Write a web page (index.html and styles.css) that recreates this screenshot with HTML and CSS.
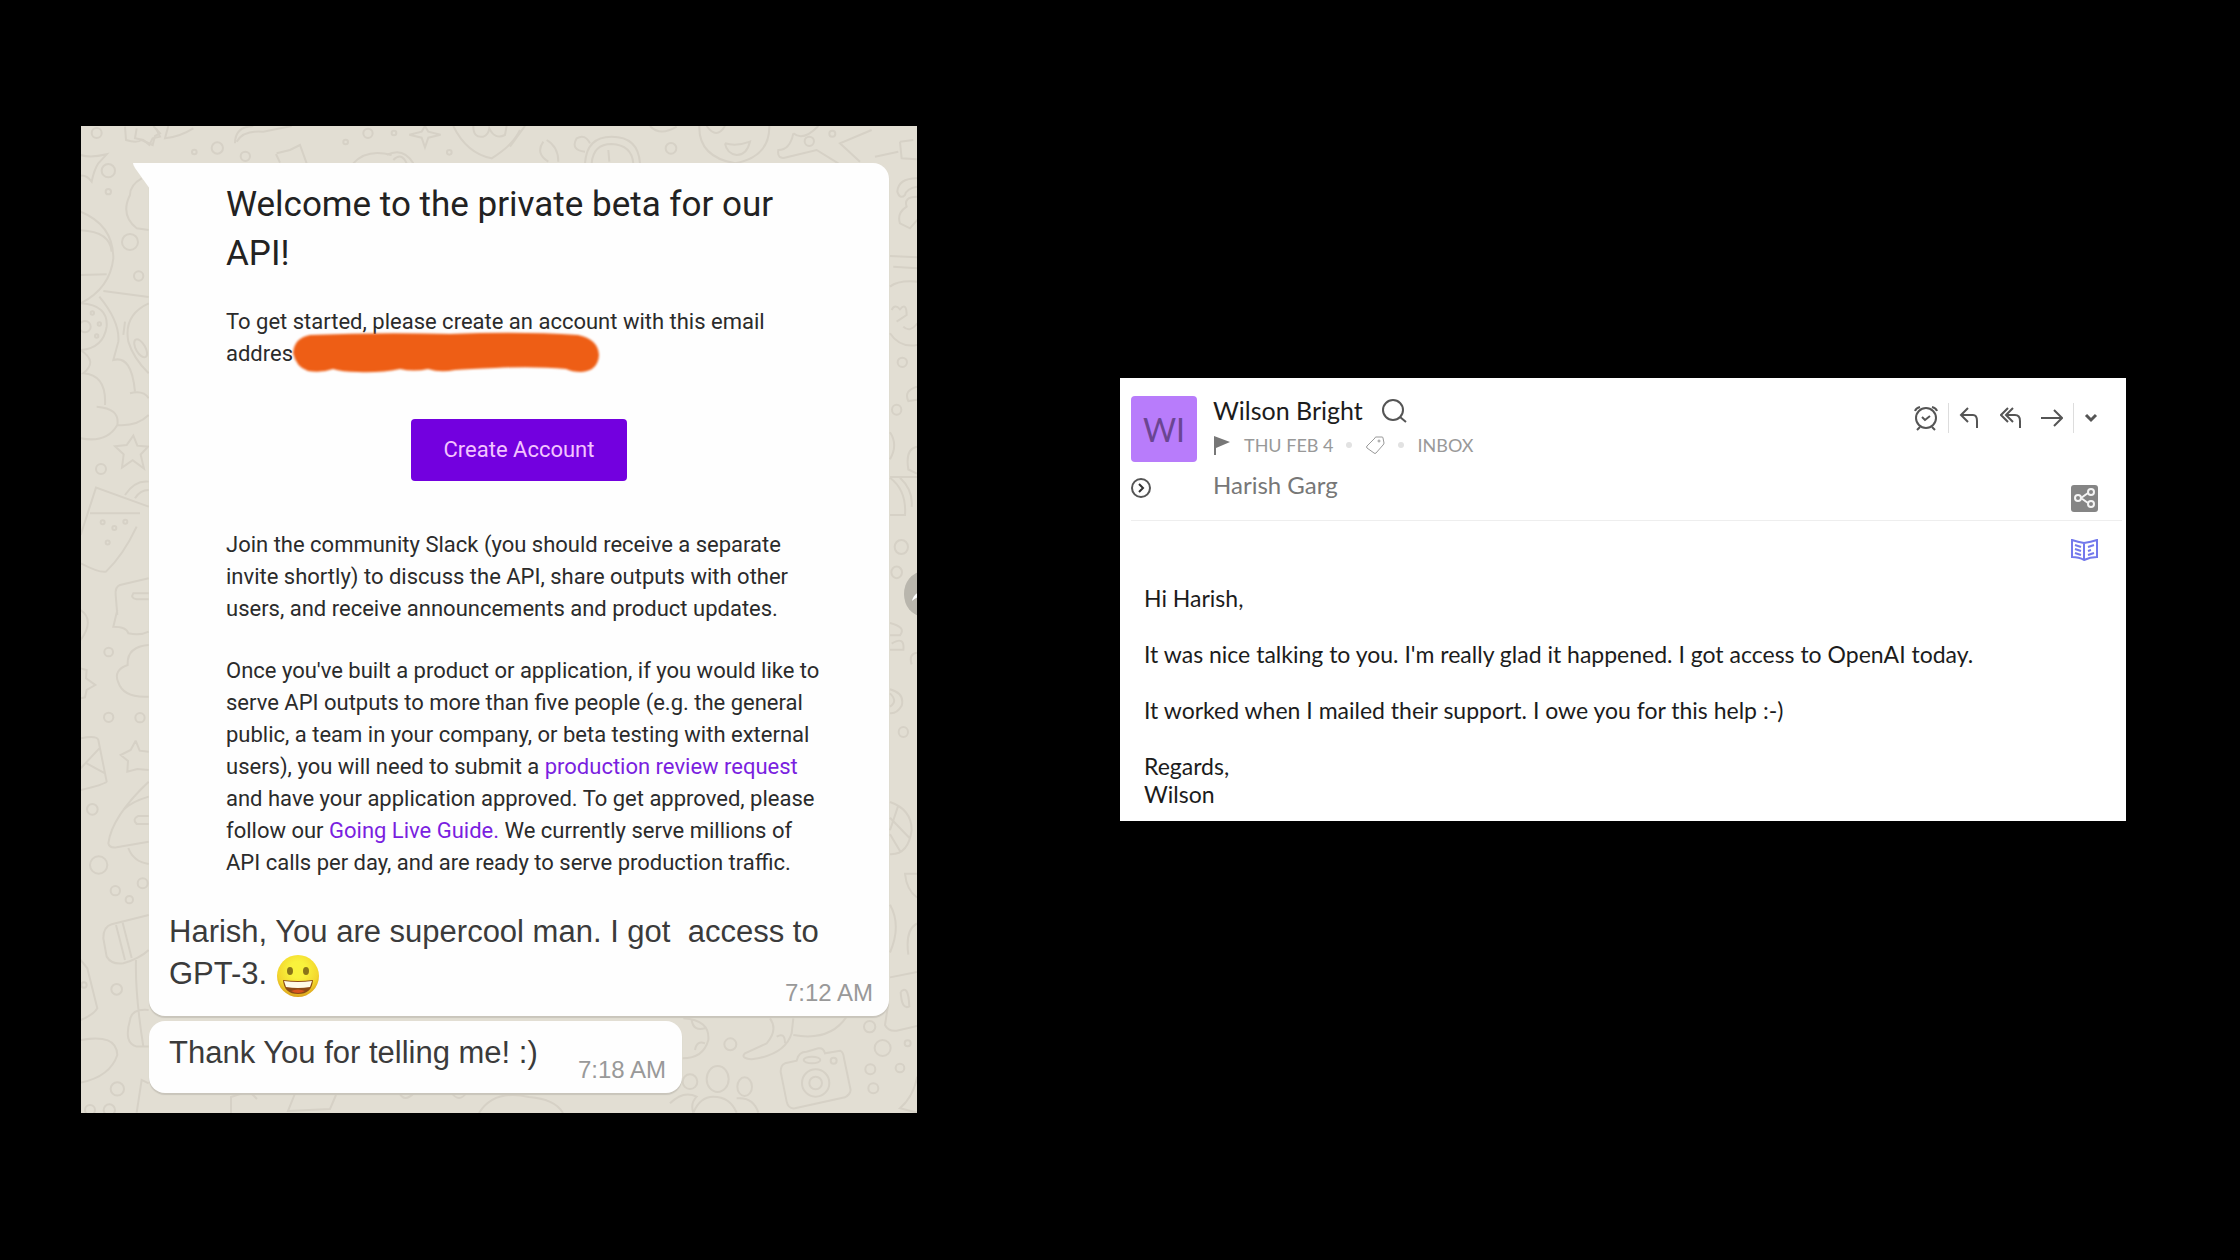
FILE: index.html
```html
<!DOCTYPE html>
<html lang="en">
<head>
<meta charset="utf-8">
<title>Messages</title>
<link rel="stylesheet" href="styles.css">
</head>
<body>
<main class="board">
  <section class="chat" aria-label="Chat">
    <svg class="wallpaper" aria-hidden="true">
      <g transform="translate(-11 -11) scale(.3333)">
        <circle cx="80" cy="54" r="15"/><circle cx="115" cy="167" r="20"/><circle cx="115" cy="230" r="8"/>
        <path d="M32 120Q60 130 110 118L85 145Q72 165 65 200Q50 180 32 182M200 40l-5 30 25 5 18 15 10-20 22-5-12-25"/>
        <circle cx="180" cy="381" r="24"/><circle cx="206" cy="483" r="14"/>
        <path d="M32 290Q130 330 130 430Q120 520 32 565M32 346Q120 350 125 410M32 480L110 478M215 190Q180 210 180 240Q150 300 200 340L236 345"/>
        <path d="M100 528L236 546M88 545Q150 620 145 680L130 735Q185 720 195 830M236 565Q160 600 175 680Q190 730 236 775M165 620L160 660M32 565Q115 570 110 635Q100 700 32 705"/>
        <circle cx="45" cy="635" r="17"/><circle cx="67" cy="594" r="5"/><circle cx="88" cy="627" r="5"/><circle cx="80" cy="663" r="5"/>
        <ellipse cx="212" cy="700" rx="14" ry="30" transform="rotate(-30 212 700)"/>
        <path d="M32 705Q85 740 40 775Q110 780 105 870M80 875Q150 880 142 930Q110 985 32 970M142 930Q200 935 236 900M180 835Q220 825 236 850"/>
        <path d="M190 962l12 30 32 3-22 24 10 42-34-25-32 22 5-40-26-24 35-4z"/><circle cx="93" cy="1062" r="15"/>
        <path d="M32 1260L78 1118 236 1175M60 1195H210M32 1345Q90 1375 108 1370Q160 1320 200 1235M165 1140Q195 1095 236 1100M195 1150Q210 1125 236 1125"/>
        <circle cx="98" cy="1222" r="6"/><circle cx="133" cy="1239" r="6"/><circle cx="166" cy="1220" r="6"/><circle cx="113" cy="1283" r="6"/>
        <path d="M236 1390L150 1410Q135 1415 137 1440L142 1500M236 1435H190q-10 15 10 18H236"/>
      </g>
      <g transform="translate(-11 484) scale(.3333)">
        <path d="M32 0Q75 30 32 90M142 0L130 50Q170 50 175 70Q210 78 236 65"/>
        <circle cx="116" cy="126" r="13"/><circle cx="116" cy="322" r="14"/><circle cx="210" cy="323" r="14"/>
        <path d="M236 105Q170 110 173 165Q130 180 144 215Q160 265 236 260M32 175L50 180 48 205 76 225 50 240 45 262 32 265"/>
        <path d="M32 385Q80 375 85 390L110 515Q100 525 32 540M88 415L32 475M50 460L105 490M197 392l12 30 27 3M197 392l-15 28-30 15 22 18-2 32 30-8 34 3"/>
        <circle cx="67" cy="598" r="16"/><circle cx="86" cy="765" r="26"/><circle cx="136" cy="842" r="14"/><circle cx="178" cy="869" r="11"/><circle cx="218" cy="820" r="15"/>
        <path d="M236 515Q125 620 115 700Q118 715 140 712L236 695M236 560Q185 575 160 600M236 618H205q-20 10-5 24H236M175 714Q190 755 236 762"/>
        <path d="M236 915L125 943Q100 950 100 985L110 1040Q125 1065 160 1060Q210 1045 236 1020M138 945L165 1050M158 938L185 1044"/>
        <circle cx="140" cy="1138" r="16"/><circle cx="42" cy="1125" r="8"/>
        <path d="M32 1050L52 1075 82 1195Q70 1215 32 1230M198 1050Q195 1150 220 1310M236 1200Q185 1195 180 1230Q160 1300 200 1310L236 1310M32 1290Q140 1270 142 1335Q120 1400 32 1418M200 1508L215 1410 236 1420"/>
        <circle cx="142" cy="1437" r="20"/><circle cx="60" cy="1500" r="15"/><circle cx="118" cy="1500" r="17"/>
      </g>
      <g transform="translate(39 -6) scale(.3333)">
        <path d="M15 20L18 60Q50 70 65 60L98 75 105 48 120 40 100 18M145 18L135 55Q180 50 220 25M345 70Q345 20 400 18M350 65Q370 30 430 35 L515 18M470 100L510 90 540 75 560 130M480 128L468 102M700 130Q740 85 815 105M800 105Q850 80 880 130M820 120Q845 95 860 130M1000 18Q1040 100 1115 115Q1180 75 1200 30M1060 18Q1060 55 1090 50Q1105 45 1108 25Q1125 60 1155 45L1160 18"/>
        <circle cx="292" cy="84" r="17"/><circle cx="376" cy="109" r="14"/><circle cx="223" cy="96" r="7"/><circle cx="677" cy="66" r="7"/><circle cx="744" cy="40" r="14"/><circle cx="822" cy="39" r="7"/><circle cx="988" cy="97" r="7"/>
        <path d="M868 44L905 35 915 18 925 35 962 44 925 53 915 82 905 53z"/>
      </g>
      <g transform="translate(429 -6) scale(.3333)">
        <path d="M0 80L45 18M100 65Q75 100 115 125M110 60Q145 80 145 125M225 130Q230 50 305 50Q385 50 390 130M245 130Q250 72 305 72Q365 75 370 130M295 90L298 125M225 95Q180 90 200 55Q225 40 240 70M420 18Q450 50 500 20M568 18Q565 110 675 130Q780 110 778 18M590 18Q620 60 645 18M645 70Q680 80 720 65Q710 105 680 105Q650 100 645 70M850 40Q880 65 925 18M850 40Q840 90 805 90Q800 120 830 112L920 90 985 130M1085 30L990 70 1050 125M1095 110L1165 95M1170 65L1210 60M1170 65L1175 115 1220 118"/>
        <circle cx="483" cy="85" r="16"/><circle cx="898" cy="64" r="14"/><circle cx="967" cy="41" r="9"/>
        <path d="M1222 175Q1165 175 1162 215Q1170 240 1185 225Q1190 205 1222 200M1222 230Q1180 230 1190 260Q1160 280 1170 310L1200 325 1222 300M1140 408L1222 412M1150 440L1222 445M1140 500Q1165 480 1222 485M1140 640Q1170 685 1222 675M1145 570Q1155 550 1170 568Q1190 545 1190 585L1160 605M1180 620Q1200 640 1222 610"/>
        <circle cx="1177" cy="727" r="14"/>
      </g>
      <g transform="translate(789 244) scale(.3333 .4146)">
        <ellipse cx="80" cy="96" rx="14" ry="12"/><ellipse cx="94" cy="427" rx="20" ry="17"/><ellipse cx="80" cy="488" rx="16" ry="14"/><ellipse cx="100" cy="873" rx="14" ry="12"/>
        <path d="M141 40Q100 50 115 75L141 72M141 185Q105 190 115 240L141 250M60 150Q85 180 60 215M60 258H141M60 260Q110 290 105 350H60M90 260Q130 290 125 330M60 610Q110 620 90 640H60M65 660Q105 640 100 675H60M60 770Q105 780 95 810Q80 830 60 828M60 780Q85 800 60 812M60 1042Q125 1060 125 1110Q115 1170 60 1168M60 1080L120 1130M60 1120L90 1160M85 1050L60 1110M141 1215H105Q110 1255 141 1272M60 1290Q95 1340 60 1405M141 1335Q105 1350 115 1410M60 1465L141 1452M92 1500Q115 1480 118 1535Q95 1545 92 1500M141 682Q115 685 125 710"/>
      </g>
      <g transform="translate(589 874) scale(.3333)">
        <path d="M40 55Q120 60 115 120Q100 175 38 175M65 60Q70 95 105 85M75 150Q80 120 105 130M300 55Q325 90 290 130L225 160Q210 175 245 178Q345 165 365 100L370 55M320 110Q345 95 345 130M370 105Q480 125 530 50M655 10L645 75Q655 95 680 92L742 78M742 230Q730 290 690 325L742 338"/>
        <path d="M345 190L380 182Q385 155 410 155L445 145Q460 142 465 160L510 152Q520 155 522 175L542 270Q540 285 525 292L375 325Q355 328 350 305L332 215Q332 195 345 190z"/>
        <circle cx="437" cy="249" r="41"/><circle cx="437" cy="249" r="19"/><circle cx="491" cy="182" r="9"/><ellipse cx="426" cy="180" rx="25" ry="10"/>
        <circle cx="181" cy="133" r="18"/><circle cx="599" cy="80" r="17"/><circle cx="638" cy="144" r="24"/><circle cx="601" cy="208" r="15"/><circle cx="690" cy="204" r="13"/><circle cx="610" cy="265" r="15"/><circle cx="713" cy="130" r="9"/>
        <circle cx="60" cy="245" r="22"/><ellipse cx="143" cy="237" rx="33" ry="39"/><ellipse cx="224" cy="260" rx="22" ry="28"/>
        <path d="M0 310Q40 270 80 290Q60 310 70 338M70 338Q90 290 130 290Q180 290 200 338M200 295Q250 290 265 338"/>
      </g>
      <path d="M150 987v-16l18-6 8 8M215 965l-8 20 42-2 6-14M318 966q5 12 16 0M398 987q15-24 50-16 26 2 34 16M370 966q8 12 16 0"/>
    </svg>

    <article class="bubble bubble-first">
      <svg class="tail" viewBox="0 0 17 26" aria-hidden="true"><path d="M0 0H17V26L2 5Q0 2 0 0Z"/></svg>
      <div class="letter">
        <h1>Welcome to the private beta for our API!</h1>
        <p class="intro">To get started, please create an account with this email <span class="redacted">addres<svg viewBox="0 0 312 44" aria-hidden="true"><path d="M20 4Q90 1 160 3Q230 0 288 4Q308 8 309 24Q308 40 291 41Q282 41 276 38Q245 35 205 37Q180 38 165 39Q150 42 138 38Q124 41 110 38Q90 42 68 41Q52 41 43 38Q32 42 18 40Q6 36 3 22Q4 7 20 4Z"/></svg></span></p>
        <button class="create" type="button">Create Account</button>
        <p>Join the community Slack (you should receive a separate invite shortly) to discuss the API, share outputs with other users, and receive announcements and product updates.</p>
        <p>Once you've built a product or application, if you would like to serve API outputs to more than five people (e.g. the general public, a team in your company, or beta testing with external users), you will need to submit a <a href="#review">production review request</a> and have your application approved. To get approved, please follow our <a href="#guide">Going Live Guide.</a> We currently serve millions of API calls per day, and are ready to serve production traffic.</p>
      </div>
      <p class="caption">Harish, You are supercool man. I got&nbsp; access to GPT-3.
        <svg class="emoji" viewBox="0 0 44 44" role="img" aria-label="grinning face">
          <defs><radialGradient id="skin" cx=".5" cy=".35" r=".65"><stop offset=".3" stop-color="#f9f23c"/><stop offset=".75" stop-color="#f3d62d"/><stop offset="1" stop-color="#dba11c"/></radialGradient></defs>
          <circle cx="22" cy="22" r="21" fill="url(#skin)"/>
          <ellipse cx="14" cy="17" rx="3" ry="4" fill="#8a7519"/><ellipse cx="30" cy="17" rx="3" ry="4" fill="#8a7519"/>
          <path d="M7 26Q22 28 37 26Q36 40 22 40Q8 40 7 26Z" fill="#8c4a16"/>
          <path d="M8 27Q22 29 36 27L34 33Q22 35 10 33Z" fill="#fffbe8"/>
          <path d="M15 37Q22 34 29 37Q22 41 15 37Z" fill="#d9541e"/>
        </svg></p>
      <time class="stamp" datetime="07:12">7:12 AM</time>
    </article>

    <article class="bubble bubble-second">
      <p>Thank You for telling me! :)</p>
      <time datetime="07:18">7:18 AM</time>
    </article>

    <button class="forward" type="button" aria-label="Forward"><svg viewBox="0 0 36 36"><path d="M8 25Q10 16 20 15V10L28 18 20 25V20Q13 20 8 25Z"/></svg></button>
  </section>

  <section class="mail" aria-label="Email">
    <header class="mail-head">
      <div class="avatar">WI</div>
      <div class="sender">
        <div class="name-row">
          <h2>Wilson Bright</h2>
          <button type="button" aria-label="Search sender"><svg width="26" height="26" viewBox="0 0 26 26"><circle cx="12" cy="13" r="10"/><path d="M19 20L25 25"/></svg></button>
        </div>
        <div class="meta">
          <svg class="flag" width="18" height="20" viewBox="0 0 18 20"><path d="M1 1L17 7 3 13V20H1Z"/></svg>
          <span class="date">THU FEB 4</span>
          <i class="dot"></i>
          <svg class="tag" width="20" height="20" viewBox="0 0 20 20"><path d="M11 2H17Q18 2 18 3L19 8Q19 9 18 10L11 18Q10 19 9 18L2 13Q1 12 2 11L10 3Q10 2 11 2Z"/><circle cx="14" cy="6" r="1"/></svg>
          <i class="dot"></i>
          <span class="folder">INBOX</span>
        </div>
      </div>
      <div class="actions">
        <button type="button" aria-label="Remind me"><svg width="24" height="26" viewBox="1 0 24 26"><circle cx="13" cy="13" r="10"/><path d="M9 12L12 15 17 11M2 6Q3 3 7 2M19 2Q23 3 24 6M7 22L4 25M19 22L22 25"/></svg></button>
        <span class="rule"></span>
        <button type="button" aria-label="Reply"><svg width="22" height="22" viewBox="0 0 22 22"><path d="M9 1L2 8 9 15M2 8H14Q18 8 18 14V21"/></svg></button>
        <button type="button" aria-label="Reply all"><svg width="22" height="22" viewBox="0 0 22 22"><path d="M8 1L1 8 8 15M13 1L6 8 13 15M6 8H15Q20 8 20 14V21"/></svg></button>
        <button type="button" aria-label="Forward mail"><svg width="22" height="22" viewBox="0 0 22 22"><path d="M0 11H21M13 3L21 11 13 19"/></svg></button>
        <span class="rule"></span>
        <button type="button" aria-label="More"><svg class="thick" width="14" height="22" viewBox="0 0 14 22"><path d="M2 8L7 13 12 8"/></svg></button>
      </div>
      <button class="expand" type="button" aria-label="Show details"><svg width="20" height="20" viewBox="0 0 20 20"><circle cx="10" cy="10" r="9"/><path class="mark" d="M8 6L12 10 8 14"/></svg></button>
      <p class="recipient">Harish Garg</p>
      <button class="share" type="button" aria-label="Share"><svg width="27" height="27" viewBox="0 0 27 27"><path d="M10 13L17 8M10 13L17 18"/><circle cx="7" cy="13" r="3"/><circle cx="20" cy="7" r="3"/><circle cx="20" cy="19" r="3"/></svg></button>
    </header>
    <div class="reader">
      <button type="button" aria-label="Reader view"><svg width="27" height="22" viewBox="0 0 27 22"><path d="M13 4Q7 3 1 1V18Q8 18 13 21Q19 18 26 18V1Q20 3 13 4V21M4 6L10 8M4 10L10 12M4 14L10 16M17 8L23 6M17 12L20 11M17 16L23 14"/></svg></button>
    </div>
    <div class="mail-body">
      <p>Hi Harish,</p>
      <p>It was nice talking to you. I'm really glad it happened. I got access to OpenAI today.</p>
      <p>It worked when I mailed their support. I owe you for this help :-)</p>
      <p>Regards,<br>Wilson</p>
    </div>
  </section>
</main>
</body>
</html>
```
FILE: styles.css
```css
* { box-sizing: border-box; }
body { margin: 0; min-height: 100vh; background: #000; }
h1, h2, p { margin: 0; font-weight: 400; }
button { padding: 0; border: 0; background: none; display: block; }
svg { display: block; }

.board {
  display: grid;
  grid-template-columns: 836fr 1006fr;
  column-gap: 203px;
  align-items: start;
  padding: 126px 114px 80px 81px;
}

/* Chat */
.chat {
  position: relative;
  overflow: hidden;
  padding: 37px 28px 20px 68px;
  background: #e2ded3;
  font-family: "Liberation Sans", Arial, sans-serif;
  color: #3b3b3b;
}
.wallpaper {
  position: absolute;
  inset: 0;
  width: 100%;
  height: 100%;
  fill: none;
  stroke: #d6d1c6;
  stroke-width: 2px;
}
.wallpaper * { vector-effect: non-scaling-stroke; }
.bubble {
  position: relative;
  background: #fefefe;
  border-radius: 16px;
  box-shadow: 0 2px 1px #c9c5bb;
}
.bubble-first { border-top-left-radius: 0; padding-bottom: 21px; }
.tail {
  position: absolute;
  top: 0;
  left: -16px;
  width: 17px;
  height: 26px;
  fill: #fefefe;
}
.letter {
  padding: 17px 66px 0 77px;
  font: 22px/32px Roboto, sans-serif;
  color: #2b2b2b;
}
.letter h1 { font-size: 35px; line-height: 49px; margin-bottom: 28px; color: #222; }
.letter p + p { margin-top: 30px; }
.letter a { color: #7a1fe0; text-decoration: none; }
.redacted { position: relative; }
.redacted svg {
  position: absolute;
  left: 64px;
  top: -10px;
  width: 312px;
  height: 44px;
  fill: #ee5e15;
  filter: blur(1px);
}
.create {
  width: 216px;
  height: 62px;
  margin: 49px auto 48px 185px;
  border-radius: 4px;
  background: #7300df;
  color: #f3c4ff;
  font: 23px/32px Roboto, sans-serif;
}
.caption { margin: 32px 20px 0; font-size: 31px; line-height: 42px; }
.emoji { display: inline-block; width: 44px; height: 44px; margin: -8px 0; vertical-align: middle; }
.bubble time { font-size: 24px; line-height: 28px; color: #999; }
.stamp { position: absolute; right: 16px; bottom: 9px; }
.bubble-second {
  display: flex;
  justify-content: space-between;
  align-items: flex-end;
  width: 533px;
  max-width: 100%;
  margin-top: 5px;
  padding: 11px 16px 9px 20px;
}
.bubble-second p { font-size: 31px; line-height: 42px; padding-bottom: 10px; }
.forward {
  position: absolute;
  right: -23px;
  top: 446px;
  width: 36px;
  height: 44px;
  border-radius: 50%;
  background: #b9b6ad;
}
.forward svg { fill: #fff; }
.create { font-size: 22px; }

/* Mail */
.mail {
  margin-top: 252px;
  padding-bottom: 13px;
  background: #fff;
  font-family: Lato, sans-serif;
  color: #1c1c1c;
}
.mail svg { fill: none; stroke: #555; stroke-width: 2px; }
.mail-head {
  display: grid;
  grid-template-columns: 66px 1fr auto;
  column-gap: 16px;
  row-gap: 8px;
  margin: 0 4px 0 11px;
  padding: 18px 24px 8px 0;
  border-bottom: 1px solid #eee;
}
.avatar {
  height: 66px;
  border-radius: 4px;
  background: #b87cfb;
  color: #6b4592;
  font-size: 32px;
  line-height: 68px;
  text-align: center;
}
.name-row { display: flex; align-items: center; gap: 18px; height: 28px; margin-bottom: 8px; }
.name-row h2 { font-size: 25px; line-height: 28px; }
.meta {
  display: flex;
  align-items: center;
  gap: 13px;
  color: #999;
  font-size: 18px;
  line-height: 26px;
}
.meta .flag { fill: #777; stroke: none; }
.meta .tag { stroke: #999; stroke-width: 1px; }
.dot { width: 6px; height: 6px; border-radius: 50%; background: #e2e2e2; }
.actions { display: flex; align-items: center; gap: 19px; height: 44px; }
.actions .rule { width: 1px; height: 30px; margin: 0 -9px; background: #ddd; }
.mail .thick { stroke-width: 3px; }
.expand { align-self: start; margin-top: 8px; }
.mail .mark { stroke: #333; }
.recipient { font-size: 24px; line-height: 30px; color: #777; }
.share { justify-self: end; margin-top: 15px; border-radius: 3px; background: #858585; }
.mail .share svg { stroke: #f4f4f4; }
.reader { display: flex; justify-content: flex-end; padding: 18px 28px 0 0; }
.mail .reader svg { stroke: #7379ec; }
.mail-body { padding: 23px 24px 0; font-size: 23px; line-height: 28px; }
.mail-body p + p { margin-top: 28px; }
```
